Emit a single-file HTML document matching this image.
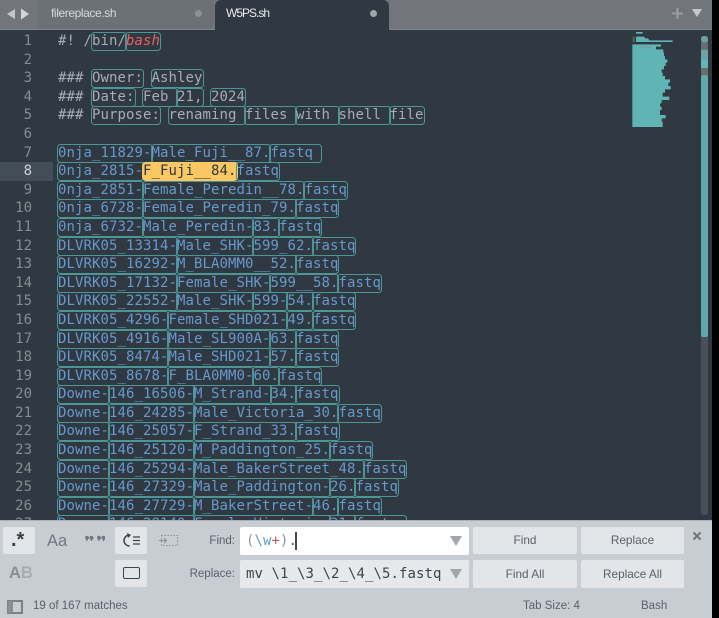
<!DOCTYPE html>
<html><head><meta charset="utf-8">
<style>
html,body{margin:0;padding:0;background:#000;width:719px;height:618px;overflow:hidden}
#app{position:absolute;left:0;top:0;width:712px;height:618px;background:#303841;overflow:hidden;font-family:"Liberation Sans",sans-serif}
#bar{position:absolute;left:0;top:0;width:712px;height:29px;background:#72767c;border-bottom:1px solid #80848a}
#tab1{position:absolute;left:38px;top:0;width:176px;height:29px;background:#6c7177;border-bottom-right-radius:6px}
#tab2{position:absolute;left:215px;top:0;width:174px;height:31px;background:#303841;border-radius:6px 6px 0 0}
.t{position:absolute;font-size:12px;line-height:16px;white-space:pre}
.dot{position:absolute;width:7px;height:7px;border-radius:50%}
#gut{position:absolute;left:0;top:162px;width:53px;height:19px;background:#434d57}
#nums{position:absolute;left:0;top:32px;width:32px;text-align:right;font:14px/18.6px "DejaVu Sans Mono",monospace;color:#868b93}
#nums div{height:18.6px}
#code{position:absolute;left:58px;top:32px;font:14px/18.6px "DejaVu Sans Mono",monospace;letter-spacing:.07px;color:#6699cc}
#code div{height:18.6px;white-space:pre}
#code .c{color:#a6acb9}
b{font-weight:normal;display:inline-block;height:17px;line-height:17px;margin-top:1px;vertical-align:top;border-radius:2.5px;box-shadow:0 0 0 1px #4c9696}
b.h{background:#fac863;color:#30363d;box-shadow:0 0 0 1px #fac863;border-radius:3px}
b.r{color:#ec5f66;font-style:italic}
#panel{position:absolute;left:0;top:520px;width:712px;height:98px;background:#c8ccd3;border-top:1px solid #aab0b6;box-sizing:border-box}
.btn{position:absolute;background:#e3e5e9;border-radius:2px;text-align:center;color:#5c6168;font-size:11.8px}
.inp{position:absolute;left:240px;width:229px;border-radius:2px;font:14px/28px "DejaVu Sans Mono",monospace;letter-spacing:.07px;white-space:pre;box-sizing:border-box;padding-left:6px}
.lab{position:absolute;font-size:11.5px;line-height:16px;color:#5c6168;text-align:right;width:70px}
.tri{position:absolute;width:0;height:0;border-left:6px solid transparent;border-right:6px solid transparent;border-top:10px solid #a2a5a9;left:450px}
</style></head><body>
<div id="app">
<div id="bar"></div>
<div id="tab1"></div>
<div id="tab2"></div>
<svg style="position:absolute;left:0;top:0" width="40" height="29"><path d="M15 9v10l-8-5z" fill="#c4c7ca"/><path d="M21 8.500v11l8-5.500z" fill="#d4d6d8"/></svg>
<div class="t" style="left:51px;top:5px;color:#d6d8da;letter-spacing:-.4px">filereplace.sh</div>
<div class="dot" style="left:195px;top:10px;background:#8c9095"></div>
<div class="t" style="left:226px;top:5px;color:#e8eaec;letter-spacing:-1px">W5PS.sh</div>
<div class="dot" style="left:370px;top:10px;background:#a2a6ab"></div>
<svg style="position:absolute;left:668px;top:4px" width="40" height="20"><path d="M4 9.500h11M9.500 4v11" stroke="#9a9da1" stroke-width="2" fill="none"/><path d="M24 5h10l-5 8z" fill="#c6c8cb"/></svg>

<div id="gut"></div>
<div id="nums">
<div>1</div><div>2</div><div>3</div><div>4</div><div>5</div><div>6</div><div>7</div><div style="color:#cdd0d4">8</div><div>9</div><div>10</div><div>11</div><div>12</div><div>13</div><div>14</div><div>15</div><div>16</div><div>17</div><div>18</div><div>19</div><div>20</div><div>21</div><div>22</div><div>23</div><div>24</div><div>25</div><div>26</div><div>27</div>
</div>
<div id="code"><div class="c">#! /<b>bin/</b><b class="r">bash</b></div><div></div><div class="c">### <b>Owner:</b> <b>Ashley</b></div><div class="c">### <b>Date:</b> <b>Feb </b><b>21,</b> <b>2024</b></div><div class="c">### <b>Purpose:</b> <b>renaming </b><b>files </b><b>with </b><b>shell </b><b>file</b></div><div></div><div><b>0nja_11829-</b><b>Male_Fuji__87.</b><b>fastq </b></div><div><b>0nja_2815-</b><b class="h">F_Fuji__84.</b><b>fastq</b></div><div><b>0nja_2851-</b><b>Female_Peredin__78.</b><b>fastq</b></div><div><b>0nja_6728-</b><b>Female_Peredin_79.</b><b>fastq</b></div><div><b>0nja_6732-</b><b>Male_Peredin-</b><b>83.</b><b>fastq</b></div><div><b>DLVRK05_13314-</b><b>Male_SHK-</b><b>599_62.</b><b>fastq</b></div><div><b>DLVRK05_16292-</b><b>M_BLA0MM0__52.</b><b>fastq</b></div><div><b>DLVRK05_17132-</b><b>Female_SHK-</b><b>599__58.</b><b>fastq</b></div><div><b>DLVRK05_22552-</b><b>Male_SHK-</b><b>599-</b><b>54.</b><b>fastq</b></div><div><b>DLVRK05_4296-</b><b>Female_SHD021-</b><b>49.</b><b>fastq</b></div><div><b>DLVRK05_4916-</b><b>Male_SL900A-</b><b>63.</b><b>fastq</b></div><div><b>DLVRK05_8474-</b><b>Male_SHD021-</b><b>57.</b><b>fastq</b></div><div><b>DLVRK05_8678-</b><b>F_BLA0MM0-</b><b>60.</b><b>fastq</b></div><div><b>Downe-</b><b>146_16506-</b><b>M_Strand-</b><b>34.</b><b>fastq</b></div><div><b>Downe-</b><b>146_24285-</b><b>Male_Victoria_30.</b><b>fastq</b></div><div><b>Downe-</b><b>146_25057-</b><b>F_Strand_33.</b><b>fastq</b></div><div><b>Downe-</b><b>146_25120-</b><b>M_Paddington_25.</b><b>fastq</b></div><div><b>Downe-</b><b>146_25294-</b><b>Male_BakerStreet_48.</b><b>fastq</b></div><div><b>Downe-</b><b>146_27329-</b><b>Male_Paddington-</b><b>26.</b><b>fastq</b></div><div><b>Downe-</b><b>146_27729-</b><b>M_BakerStreet-</b><b>46.</b><b>fastq</b></div><div><b>Downe-</b><b>146_28140-</b><b>Female_Victoria-</b><b>31.</b><b>fastq </b></div></div>

<svg style="position:absolute;left:360px;top:0" width="352" height="520" viewBox="0 0 1056 1560">
<rect x="828" y="96" width="20" height="5" fill="#5fb4b4"/>
<path d="M828 110h24l4 5h8l4 6h10l2 0v0h58v5H828z" fill="#5fb4b4"/>
<rect x="818" y="110" width="6" height="16" fill="#5a646c"/>
<path d="M817 133H903V140H888V148H910V158H912V168H915V178H922V188H917V198H912V208H905V218H908V228H915V238H930V248H925V258H932V268H915V278H908V290H928V300H905V310H900V320H905V330H900V345H917V355H905V365H908V381H817Z" fill="#5fb4b4"/>
<rect x="845" y="140" width="30" height="5" fill="#7d9ca0"/>
<rect x="1023" y="108" width="21" height="1437" rx="9" fill="#4a5058"/>
<rect x="1023" y="108" width="21" height="20" rx="8" fill="#6d9f9f"/>
<rect x="1023" y="128" width="21" height="21" fill="#666e74"/>
<rect x="1023" y="149" width="21" height="31" fill="#6ca5a5"/>
<rect x="1023" y="180" width="21" height="24" fill="#63b6b6"/>
<rect x="1023" y="204" width="21" height="21" fill="#666e74"/>
<rect x="1023" y="225" width="21" height="786" rx="6" fill="#62a8a8"/>
</svg>

<div id="panel">
<div class="btn" style="left:3px;top:6px;width:32px;height:27px"></div>
<div style="position:absolute;left:11px;top:7px;font:bold 20px/24px 'Liberation Sans',sans-serif;color:#3a3f46">.*</div>
<div style="position:absolute;left:47px;top:9px;font:16.500px/22px 'Liberation Sans',sans-serif;color:#74787f">Aa</div>
<svg style="position:absolute;left:83px;top:14px" width="22" height="10"><path d="M2 5a2 2 0 1 1 3 1.500L4 8.500zM6.500 5a2 2 0 1 1 3 1.500L8.500 8.500z" fill="#74787f" transform="translate(0 -2)"/><path d="M14 3a2 2 0 1 1 3 1.500L16 6.500zM18.500 3a2 2 0 1 1 3 1.500L20.500 6.500z" fill="#74787f"/></svg>
<div class="btn" style="left:115px;top:6px;width:32px;height:27px"></div>
<svg style="position:absolute;left:115px;top:6px" width="32" height="27"><path d="M14.500 8A5.500 5.500 0 0 0 14.500 19" stroke="#3e434a" stroke-width="1.500" fill="none"/><path d="M12 6l4 2-3 3z" fill="#3e434a"/><path d="M18 10h7M18 13.500h7M18 17h7" stroke="#3e434a" stroke-width="1.300"/></svg>
<svg style="position:absolute;left:158px;top:12px" width="22" height="16"><rect x="3.500" y="2.500" width="16" height="10" fill="none" stroke="#8a8e94" stroke-dasharray="1.500 1.500"/><path d="M1 7.500h7M6 5l2.500 2.500L6 10" stroke="#8a8e94" fill="none"/></svg>
<div class="lab" style="left:165px;top:12px">Find:</div>
<div class="inp" style="top:6px;height:28px;background:#fff;color:#8a95a0">(<span style="color:#6699cc">\w</span><span style="color:#c2555c">+</span>)<span style="color:#555">.</span></div>
<div style="position:absolute;left:295px;top:11px;width:2px;height:18px;background:#454a50"></div>
<div class="tri" style="top:15px"></div>
<div class="btn" style="left:473px;top:6px;width:104px;height:27px;line-height:27px">Find</div>
<div class="btn" style="left:581px;top:6px;width:103px;height:27px;line-height:27px">Replace</div>
<svg style="position:absolute;left:692px;top:10px" width="11" height="11"><path d="M1.500 1.500l7 7M8.500 1.500l-7 7" stroke="#70757b" stroke-width="2"/></svg>
<div style="position:absolute;left:9px;top:41px;font:bold 16.500px/22px 'Liberation Sans',sans-serif;color:#8a8e94;letter-spacing:0">A<span style="color:#a8acb2">B</span></div>
<div class="btn" style="left:115px;top:39px;width:32px;height:27px"></div>
<div style="position:absolute;left:123px;top:46px;width:15px;height:10px;border:1.500px solid #3e434a;border-radius:2px"></div>
<div class="lab" style="left:165px;top:45px">Replace:</div>
<div class="inp" style="top:39px;height:28px;background:#e6e8eb;color:#3f444a">mv \1_\3_\2_\4_\5.fastq</div>
<div class="tri" style="top:48px"></div>
<div class="btn" style="left:473px;top:39px;width:104px;height:28px;line-height:28px">Find All</div>
<div class="btn" style="left:581px;top:39px;width:103px;height:28px;line-height:28px">Replace All</div>
<svg style="position:absolute;left:7px;top:79px" width="16" height="14"><rect x="1" y="1" width="14" height="12" fill="none" stroke="#62676e" stroke-width="1.500"/><rect x="1" y="1" width="5" height="12" fill="#8a8e94"/></svg>
<div class="t" style="left:33px;top:77px;font-size:11.5px;color:#5c6168">19 of 167 matches</div>
<div class="t" style="left:523px;top:77px;font-size:11.5px;color:#5c6168">Tab Size: 4</div>
<div class="t" style="left:641px;top:77px;font-size:11.5px;color:#5c6168">Bash</div>
</div>
</div>
</body></html>
